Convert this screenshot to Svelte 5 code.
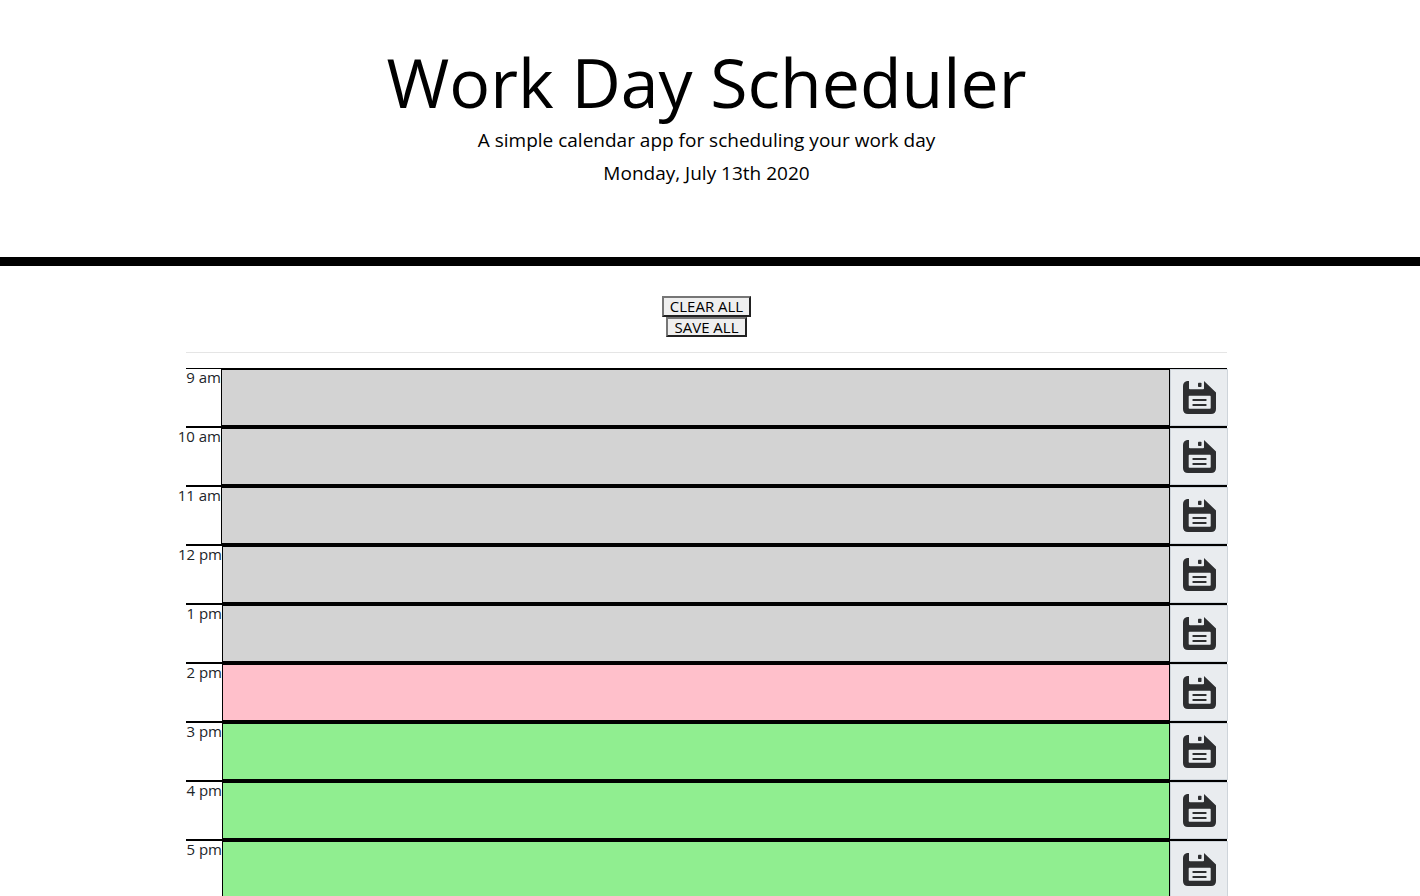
<script>
  let hours = $state([
    { label: '9 am', phase: 'past', note: '' },
    { label: '10 am', phase: 'past', note: '' },
    { label: '11 am', phase: 'past', note: '' },
    { label: '12 pm', phase: 'past', note: '' },
    { label: '1 pm', phase: 'past', note: '' },
    { label: '2 pm', phase: 'present', note: '' },
    { label: '3 pm', phase: 'future', note: '' },
    { label: '4 pm', phase: 'future', note: '' },
    { label: '5 pm', phase: 'future', note: '' }
  ]);
  let saved = {};

  function save(hour) {
    saved[hour.label] = hour.note;
  }
  function saveAll() {
    hours.forEach(save);
  }
  function clearAll() {
    hours.forEach((hour) => (hour.note = ''));
    saved = {};
  }
</script>

<header>
  <h1>Work Day Scheduler</h1>
  <p>A simple calendar app for scheduling your work day</p>
  <p>Monday, July 13th 2020</p>
</header>

<main>
  <div class="planner">
    <div class="actions">
      <button type="button" onclick={clearAll}>CLEAR ALL</button>
      <button type="button" onclick={saveAll}>SAVE ALL</button>
    </div>
    <hr />
    {#each hours as hour, i}
      <div class="row">
        <label for="hour-{i}" class:morning={hour.label.endsWith('am')}>{hour.label}</label>
        <textarea id="hour-{i}" class={hour.phase} bind:value={hour.note}></textarea>
        <button type="button" class="save" aria-label="Save {hour.label}" onclick={() => save(hour)}>
          <svg viewBox="0 0 33 33" aria-hidden="true">
            <path
              fill="#2d2e30"
              fill-rule="evenodd"
              d="M4 0H6V7.500Q6 8.300 7 8.300H20Q21 8.300 21 7.500V0L33 11.500V28Q33 33 28 33H5Q0 33 0 28V5Q0 1 4 0ZM6.500 14.700Q5.700 14.700 5.700 15.500V27Q5.700 27.700 6.500 27.700H27Q27.700 27.700 27.700 27V15.500Q27.700 14.700 27 14.700Z"
            />
            <rect x="15" y="1.700" width="3.500" height="4.300" rx="0.800" fill="#2d2e30" />
            <path d="M10.300 19H22.700M10.300 24H22.700" stroke="#2d2e30" stroke-width="2" stroke-linecap="round" />
          </svg>
        </button>
      </div>
    {/each}
  </div>
</main>

<style>
  :global(body) {
    margin: 0;
    overflow-x: hidden;
    background: #fff;
    color: #000;
    font-family: 'Open Sans', sans-serif;
    font-size: 15px;
    font-weight: 400;
    line-height: 20px;
  }
  :global(html) {
    scrollbar-width: none;
  }
  header {
    padding: 40px 7px 67px 0;
    border-bottom: 9px solid #000;
    text-align: center;
  }
  h1 {
    margin: 0;
    font-size: 68px;
    font-weight: 400;
    line-height: 84px;
  }
  p {
    margin: 0;
    font-size: 19px;
    line-height: 33px;
  }
  main {
    padding: 30px 7px 0 0;
  }
  .planner {
    max-width: 1041px;
    margin: 0 auto;
  }
  .actions {
    display: flex;
    flex-direction: column;
    align-items: center;
  }
  .actions button {
    box-sizing: border-box;
    height: 21px;
    padding: 0 6px;
    border: 2px solid;
    border-color: #767676 #212121 #212121 #767676;
    background: #efefef;
    color: #000;
    font: inherit;
    line-height: 17px;
  }
  .actions button + button {
    height: 20px;
    line-height: 16px;
  }
  hr {
    margin: 15px 0;
    border: 0;
    border-top: 1px solid #e5e5e5;
  }
  .row {
    display: flex;
    box-sizing: border-box;
    height: 59px;
    border: solid #000;
    border-width: 1px 0;
  }
  label {
    display: flex;
    justify-content: flex-end;
    flex: none;
    width: 36px;
    height: 20px;
    color: #212529;
    line-height: 16px;
    white-space: nowrap;
  }
  label.morning {
    width: 35px;
  }
  textarea {
    box-sizing: border-box;
    flex: 1;
    min-width: 0;
    margin: 0;
    padding: 2px 12px;
    border: 1px solid #000;
    border-radius: 0;
    outline: 0;
    color: #000;
    font: inherit;
    resize: none;
  }
  .past {
    background: #d3d3d3;
  }
  .present {
    background: #ffc0cb;
  }
  .future {
    background: #90ee90;
  }
  .save {
    display: flex;
    align-items: center;
    justify-content: center;
    box-sizing: border-box;
    flex: none;
    width: 58px;
    margin-right: -1px;
    padding: 0 0 0 1px;
    border: 1px solid #ced4da;
    background: #e9ecef;
  }
  .save svg {
    width: 33px;
    height: 33px;
    fill: none;
  }
</style>
